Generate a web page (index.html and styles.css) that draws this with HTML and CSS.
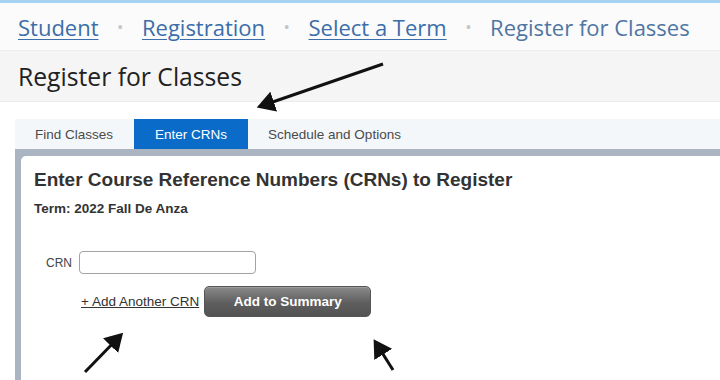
FILE: index.html
```html
<!DOCTYPE html>
<html lang="en">

<head>
    <meta charset="UTF-8">
    <meta name="viewport" content="width=device-width, initial-scale=1.0">
    <title>Register for Classes</title>
    <link rel="stylesheet" href="styles.css">
</head>

<body>
    <div class="topline"></div>
    <nav class="crumbs">
        <a href="#">Student</a>
        <span class="dot">&bull;</span>
        <a href="#">Registration</a>
        <span class="dot">&bull;</span>
        <a href="#">Select a Term</a>
        <span class="dot">&bull;</span>
        <span class="current">Register for Classes</span>
    </nav>
    <header class="title-bar">
        <h1>Register for Classes</h1>
    </header>

    <div class="tabs">
        <div class="tab">Find Classes</div>
        <div class="tab active">Enter CRNs</div>
        <div class="tab">Schedule and Options</div>
    </div>
    <div class="frame">
        <div class="panel">
            <h2>Enter Course Reference Numbers (CRNs) to Register</h2>
            <p class="term">Term: 2022 Fall De Anza</p>
            <div class="crn-row">
                <label for="crn1">CRN</label>
                <input type="text" id="crn1">
            </div>
            <div class="actions">
                <a href="#" class="add-link">+ Add Another CRN</a>
                <button class="btn">Add to Summary</button>
            </div>
        </div>
    </div>

    <!-- annotation arrows -->
    <svg class="arrows" width="720" height="380" viewBox="0 0 720 380">
        <defs>
            <marker id="head" markerWidth="7" markerHeight="7" refX="4.5" refY="3.5" orient="auto" markerUnits="strokeWidth">
                <path d="M0,0 L6,3.5 L0,7 Z" fill="#111"/>
            </marker>
        </defs>
        <line x1="383" y1="64" x2="261" y2="106" stroke="#111" stroke-width="3" marker-end="url(#head)"/>
        <line x1="85" y1="372" x2="120" y2="336" stroke="#111" stroke-width="3" marker-end="url(#head)"/>
        <line x1="393" y1="370" x2="376" y2="343" stroke="#111" stroke-width="3" marker-end="url(#head)"/>
    </svg>
</body>

</html>
```

FILE: styles.css
```css
body {
    margin: 0;
    width: 720px;
    height: 380px;
    overflow: hidden;
    position: relative;
    background: #fff;
    font-family: Arial, "Liberation Sans", sans-serif;
}

.topline {
    height: 3px;
    background: #a4d2f0;
}

.crumbs {
    height: 47px;
    display: flex;
    align-items: center;
    padding-left: 18px;
    background: #fbfbfb;
    font-family: "Open Sans", sans-serif;
    font-size: 22px;
    color: #4f76a3;
}

.crumbs a {
    color: #3b6ea8;
    text-decoration: underline;
    text-decoration-thickness: 1px;
    text-underline-offset: 3px;
}

.crumbs .dot {
    color: #c4c4c4;
    font-size: 17px;
    margin: 0 18.5px;
}

.title-bar {
    height: 50px;
    background: #f5f5f5;
    border-top: 1px solid #eeeeee;
    border-bottom: 1px solid #ececec;
    display: flex;
    align-items: center;
    padding-left: 18px;
}

.title-bar h1 {
    margin: 0;
    font-family: "Open Sans", sans-serif;
    font-weight: 400;
    font-size: 24.7px;
    color: #222;
}

.tabs {
    margin: 17px 0 0 15px;
    height: 30px;
    display: flex;
    background: #f4f7fa;
}

.tab {
    padding: 0 20px;
    display: flex;
    align-items: center;
    font-size: 13.5px;
    color: #4a4a4a;
}

.tab.active {
    background: #0a6cc8;
    color: #fff;
    padding: 0 21px;
    margin-left: 1px;
}

.frame {
    margin-left: 15px;
    background: #aab5c1;
    padding: 7px 0 0 6px;
    height: 240px;
}

.panel {
    background: #fff;
    height: 100%;
    border-top-left-radius: 5px;
    padding: 13px 0 0 13px;
    box-sizing: border-box;
}

.panel h2 {
    margin: 0;
    font-size: 19px;
    font-weight: 700;
    color: #333;
}

.term {
    margin: 10px 0 0;
    font-size: 13.5px;
    font-weight: 700;
    color: #333;
}

.crn-row {
    margin-top: 35px;
    padding-left: 12px;
    display: flex;
    align-items: center;
    gap: 7px;
}

.crn-row label {
    font-size: 12px;
    color: #444;
}

.crn-row input {
    width: 177px;
    height: 23px;
    box-sizing: border-box;
    border: 1px solid #a3a3a3;
    border-radius: 4px;
}

.actions {
    margin-top: 12px;
    padding-left: 47px;
    display: flex;
    align-items: center;
    gap: 5px;
}

.add-link {
    font-size: 13.5px;
    color: #333;
    text-decoration: underline;
}

.btn {
    width: 167px;
    height: 31px;
    border: 1px solid #555;
    border-radius: 5px;
    background: linear-gradient(#8a8a8a, #5e5e5e 55%, #535353);
    box-shadow: inset 0 1px 0 #9c9c9c;
    color: #fff;
    font-family: Arial, "Liberation Sans", sans-serif;
    font-size: 13.5px;
    font-weight: 700;
}

.arrows {
    position: absolute;
    left: 0;
    top: 0;
}
```
